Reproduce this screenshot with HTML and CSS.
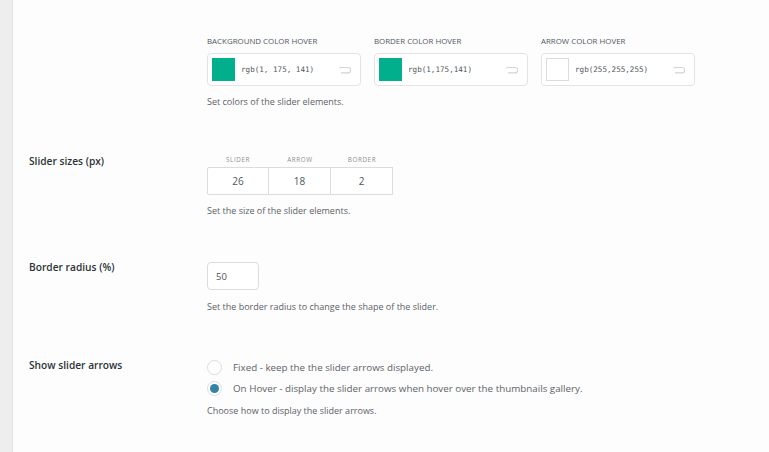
FILE: index.html
```html
<!DOCTYPE html>
<html>
<head>
<meta charset="utf-8">
<link rel="stylesheet" href="styles.css">
</head>
<body>
<div class="page">
  <aside class="side"></aside>
  <main class="panel">
    <div class="row row-colors">
      <div class="label"></div>
      <div class="field">
        <div class="colors">
          <div class="color">
            <div class="cap">Background color hover</div>
            <div class="picker">
              <span class="swatch green"></span>
              <span class="val">rgb(1, 175, 141)</span>
              <svg class="undo" width="12" height="8" viewBox="0 0 12 8"><path d="M1.5 1.5 H9 a2.7 2.7 0 0 1 0 5.4 H2" fill="none" stroke="#d4d4d4" stroke-width="1.2"/><path d="M1 0.5 v2" stroke="#d4d4d4" stroke-width="1"/></svg>
            </div>
          </div>
          <div class="color">
            <div class="cap">Border color hover</div>
            <div class="picker">
              <span class="swatch green"></span>
              <span class="val">rgb(1,175,141)</span>
              <svg class="undo" width="12" height="8" viewBox="0 0 12 8"><path d="M1.5 1.5 H9 a2.7 2.7 0 0 1 0 5.4 H2" fill="none" stroke="#d4d4d4" stroke-width="1.2"/><path d="M1 0.5 v2" stroke="#d4d4d4" stroke-width="1"/></svg>
            </div>
          </div>
          <div class="color">
            <div class="cap">Arrow color hover</div>
            <div class="picker">
              <span class="swatch white"></span>
              <span class="val">rgb(255,255,255)</span>
              <svg class="undo" width="12" height="8" viewBox="0 0 12 8"><path d="M1.5 1.5 H9 a2.7 2.7 0 0 1 0 5.4 H2" fill="none" stroke="#d4d4d4" stroke-width="1.2"/><path d="M1 0.5 v2" stroke="#d4d4d4" stroke-width="1"/></svg>
            </div>
          </div>
        </div>
        <p class="desc">Set colors of the slider elements.</p>
      </div>
    </div>

    <div class="row row-sizes">
      <div class="label">Slider sizes (px)</div>
      <div class="field">
        <div class="sizes">
          <div class="size"><div class="scap">Slider</div><div class="cell">26</div></div>
          <div class="size"><div class="scap">Arrow</div><div class="cell">18</div></div>
          <div class="size"><div class="scap">Border</div><div class="cell">2</div></div>
        </div>
        <p class="desc">Set the size of the slider elements.</p>
      </div>
    </div>

    <div class="row row-radius">
      <div class="label">Border radius (%)</div>
      <div class="field">
        <div class="numbox">50</div>
        <p class="desc">Set the border radius to change the shape of the slider.</p>
      </div>
    </div>

    <div class="row row-arrows">
      <div class="label">Show slider arrows</div>
      <div class="field">
        <div class="radio"><span class="dot"></span><span>Fixed - keep the the slider arrows displayed.</span></div>
        <div class="radio"><span class="dot on"></span><span>On Hover - display the slider arrows when hover over the thumbnails gallery.</span></div>
        <p class="desc">Choose how to display the slider arrows.</p>
      </div>
    </div>
  </main>
</div>
</body>
</html>
```

FILE: styles.css
```css
* { box-sizing: border-box; }
html, body { margin: 0; padding: 0; }
body {
  font-family: "Open Sans", "Noto Sans", sans-serif;
  background: #fdfdfd;
  color: #3c434a;
}
.page {
  display: flex;
  height: 452px;
  overflow: hidden;
}
.side {
  width: 13px;
  flex: none;
  background: #eeeeee;
  border-right: 1px solid #e2e2e2;
}
.panel {
  flex: 1;
  padding: 36px 0 0 16px;
}
.row {
  display: grid;
  grid-template-columns: 178px 1fr;
}
.label {
  font-size: 10.2px;
  line-height: 11px;
  font-weight: 600;
  color: #2c3338;
}
.colors {
  display: flex;
  gap: 13px;
}
.color { width: 154px; }
.cap {
  font-size: 7.9px;
  text-transform: uppercase;
  color: #50575e;
  height: 17px;
  line-height: 10px;
}
.picker {
  height: 33px;
  border: 1px solid #e3e3e3;
  border-radius: 4px;
  background: #fff;
  display: flex;
  align-items: center;
  padding: 0 9px 0 4px;
}
.swatch {
  width: 23px;
  height: 23px;
  flex: none;
}
.swatch.green { background: #01af8d; }
.swatch.white { background: #fff; border: 1px solid #dcdcdc; }
.val {
  font-family: "DejaVu Sans Mono", "Liberation Mono", monospace;
  font-size: 7.6px;
  color: #50575e;
  margin-left: 6px;
  flex: 1;
}
.undo { flex: none; }
.desc {
  margin: 0;
  font-size: 9px;
  color: #5c6268;
}
.row-colors .desc { margin-top: 9px; }
.row-sizes { margin-top: 48px; }
.sizes { display: flex; }
.size { width: 62px; }
.scap {
  font-size: 6.3px;
  text-transform: uppercase;
  letter-spacing: 0.6px;
  text-align: center;
  color: #8c8f94;
  height: 11px;
  line-height: 8px;
}
.cell {
  height: 28px;
  border: 1px solid #dcdcdc;
  margin-left: -1px;
  display: flex;
  align-items: center;
  justify-content: center;
  font-size: 10px;
  color: #50575e;
  background: #fff;
}
.size:first-child .cell { margin-left: 0; border-radius: 2px 0 0 2px; }
.row-sizes .desc { margin-top: 9px; }
.row-radius { margin-top: 45px; }
.numbox {
  width: 52px;
  height: 28px;
  border: 1px solid #dcdcdc;
  border-radius: 4px;
  background: #fff;
  font-size: 9.5px;
  color: #50575e;
  display: flex;
  align-items: center;
  padding-left: 8px;
}
.row-radius .desc { margin-top: 10px; }
.row-arrows { margin-top: 44px; }
.row-arrows .label { padding-top: 3px; }
.radio {
  display: flex;
  align-items: center;
  height: 21px;
  font-size: 9.8px;
  color: #5c6268;
}
.dot {
  width: 15px;
  height: 15px;
  border-radius: 50%;
  border: 1px solid #dcdcde;
  background: #fff;
  margin-right: 11px;
  flex: none;
  display: flex;
  align-items: center;
  justify-content: center;
}
.dot.on::after {
  content: "";
  width: 9px;
  height: 9px;
  border-radius: 50%;
  background: #3582a8;
}
.row-arrows .desc { margin-top: 5px; }
```
